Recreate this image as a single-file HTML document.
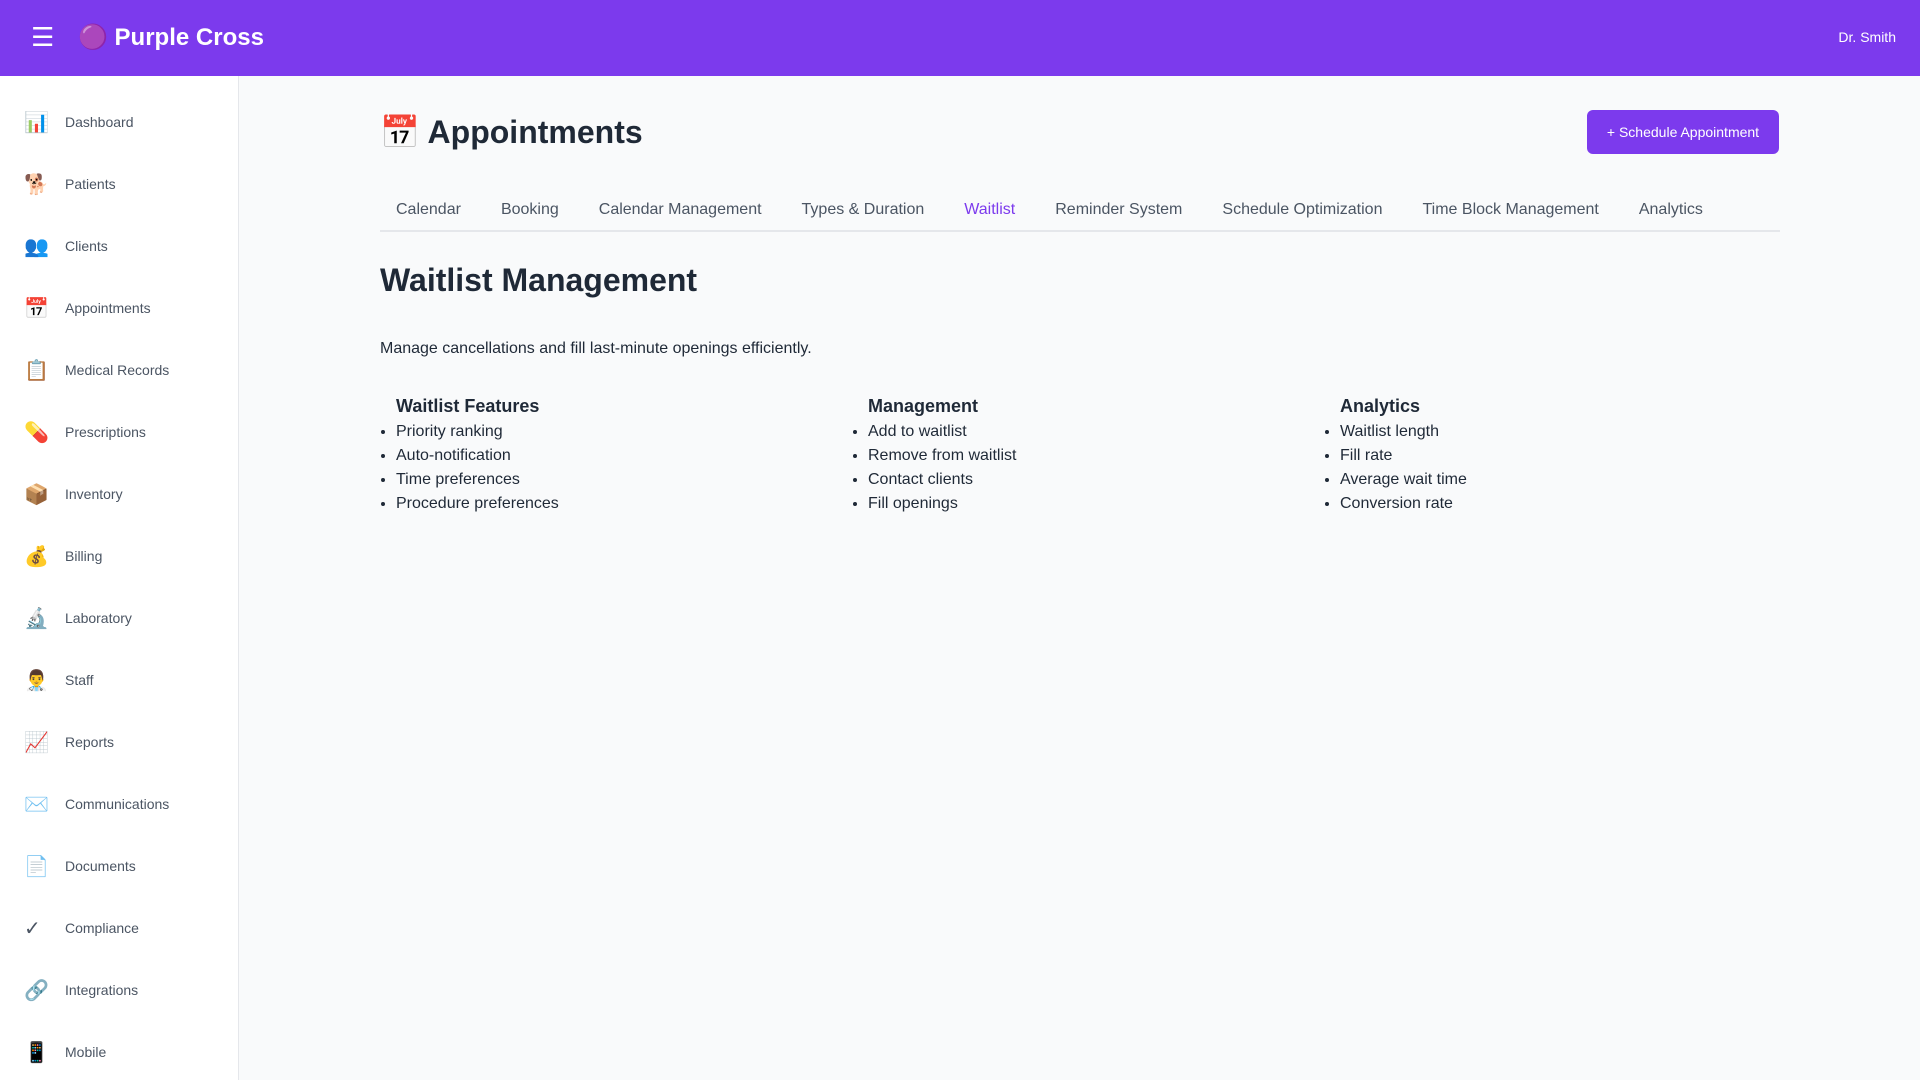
<!DOCTYPE html>
<html><head><meta charset="utf-8"><style>
*{box-sizing:border-box;margin:0;padding:0}
body{width:1920px;height:1080px;overflow:hidden;font-family:"Liberation Sans",sans-serif;background:#f9fafb;color:#1f2937}
.top{position:absolute;left:0;top:0;width:1920px;height:76px;background:#7c3aed;color:#fff;display:flex;align-items:center}
.ham{position:absolute;left:31px;top:22px;font-size:26px;line-height:30px}
.logo{position:absolute;left:78px;top:20px;font-size:24px;font-weight:bold;line-height:36px}
.user{position:absolute;right:24px;top:29px;font-size:14px}
.side{position:absolute;left:0;top:76px;width:239px;height:1004px;background:#fff;border-right:1px solid #e5e7eb}
.item{position:absolute;left:24px;height:30px;display:flex;align-items:center;font-size:14px;color:#4b5563}
.item .i{width:41px;font-size:20px}
.main{position:absolute;left:380px;top:76px;width:1400px}
h1{position:absolute;top:36px;left:0;font-size:32px;line-height:40px;font-weight:bold;color:#1f2937}
.btn{position:absolute;left:1207px;top:34px;width:192px;height:44px;background:#7c3aed;color:#fff;border-radius:6px;font-size:14px;display:flex;align-items:center;justify-content:center}
.tabs{position:absolute;top:114px;left:0;width:1400px;height:42px;border-bottom:2px solid #e5e7eb;display:flex}
.tabs span{padding:0 24px 0 16px;font-size:16px;color:#4b5563;line-height:40px}
.tabs span.a{color:#7c3aed}
h2{position:absolute;top:186px;left:0;font-size:32px;font-weight:bold;color:#1f2937}
p{position:absolute;top:264px;left:0;font-size:16px}
.cols{position:absolute;top:319px;left:0;width:1400px;display:grid;grid-template-columns:1fr 1fr 1fr;gap:16px}
.cols div{padding:0 16px}
h3{font-size:18px;line-height:22px;margin-bottom:3px}
ul{padding-left:0}
li{font-size:16px;line-height:24px}
</style></head><body>
<div class="top"><div class="ham">☰</div><div class="logo">🟣 Purple Cross</div><div class="user">Dr. Smith</div></div>
<div class="side">
<div class="item" style="top:31px"><span class="i">📊</span>Dashboard</div>
<div class="item" style="top:93px"><span class="i">🐕</span>Patients</div>
<div class="item" style="top:155px"><span class="i">👥</span>Clients</div>
<div class="item" style="top:217px"><span class="i">📅</span>Appointments</div>
<div class="item" style="top:279px"><span class="i">📋</span>Medical Records</div>
<div class="item" style="top:341px"><span class="i">💊</span>Prescriptions</div>
<div class="item" style="top:403px"><span class="i">📦</span>Inventory</div>
<div class="item" style="top:465px"><span class="i">💰</span>Billing</div>
<div class="item" style="top:527px"><span class="i">🔬</span>Laboratory</div>
<div class="item" style="top:589px"><span class="i">👨‍⚕️</span>Staff</div>
<div class="item" style="top:651px"><span class="i">📈</span>Reports</div>
<div class="item" style="top:713px"><span class="i">✉️</span>Communications</div>
<div class="item" style="top:775px"><span class="i">📄</span>Documents</div>
<div class="item" style="top:837px"><span class="i">✓</span>Compliance</div>
<div class="item" style="top:899px"><span class="i">🔗</span>Integrations</div>
<div class="item" style="top:961px"><span class="i">📱</span>Mobile</div>
</div>
<div class="main">
<h1>📅 Appointments</h1>
<div class="btn">+ Schedule Appointment</div>
<div class="tabs"><span>Calendar</span><span>Booking</span><span>Calendar Management</span><span>Types &amp; Duration</span><span class="a">Waitlist</span><span>Reminder System</span><span>Schedule Optimization</span><span>Time Block Management</span><span>Analytics</span></div>
<h2>Waitlist Management</h2>
<p>Manage cancellations and fill last-minute openings efficiently.</p>
<div class="cols">
<div><h3>Waitlist Features</h3><ul><li>Priority ranking</li><li>Auto-notification</li><li>Time preferences</li><li>Procedure preferences</li></ul></div>
<div><h3>Management</h3><ul><li>Add to waitlist</li><li>Remove from waitlist</li><li>Contact clients</li><li>Fill openings</li></ul></div>
<div><h3>Analytics</h3><ul><li>Waitlist length</li><li>Fill rate</li><li>Average wait time</li><li>Conversion rate</li></ul></div>
</div>
</div>
</body></html>
